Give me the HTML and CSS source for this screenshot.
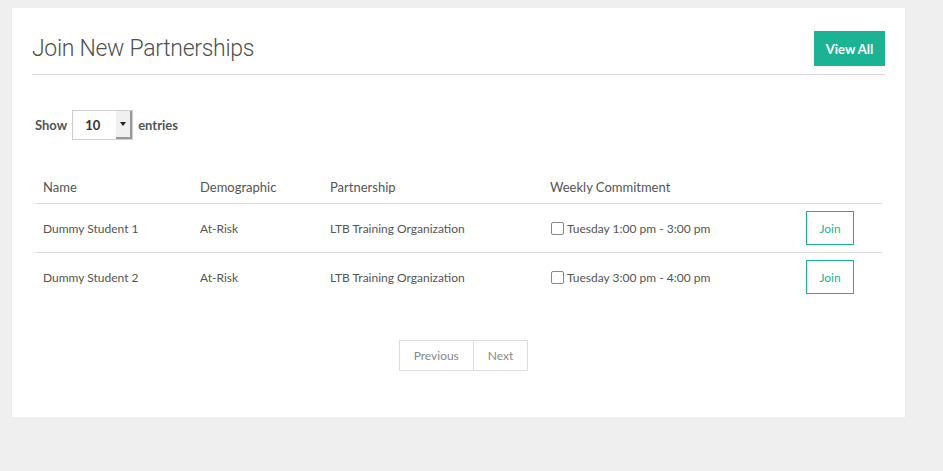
FILE: index.html
```html
<!DOCTYPE html>
<html>
<head>
<meta charset="utf-8">
<link rel="stylesheet" href="styles.css">
</head>
<body>
<div class="card">
  <div class="card-head">
    <h1 class="title">Join New Partnerships</h1>
    <a class="btn-primary">View All</a>
  </div>
  <div class="length">
    <span class="lbl">Show</span>
    <div class="select"><span class="val">10</span><span class="arrow"></span></div>
    <span class="lbl">entries</span>
  </div>
  <table class="tbl">
    <thead>
      <tr><th class="c1">Name</th><th class="c2">Demographic</th><th class="c3">Partnership</th><th class="c4">Weekly Commitment</th><th class="c5"></th></tr>
    </thead>
    <tbody>
      <tr><td>Dummy Student 1</td><td>At-Risk</td><td>LTB Training Organization</td><td><label class="chk"><span class="box"></span>Tuesday 1:00 pm - 3:00 pm</label></td><td><a class="btn-join">Join</a></td></tr>
      <tr><td>Dummy Student 2</td><td>At-Risk</td><td>LTB Training Organization</td><td><label class="chk"><span class="box"></span>Tuesday 3:00 pm - 4:00 pm</label></td><td><a class="btn-join">Join</a></td></tr>
    </tbody>
  </table>
  <div class="pager">
    <a class="pg">Previous</a><a class="pg">Next</a>
  </div>
</div>
</body>
</html>
```
FILE: styles.css
```css
html, body { margin: 0; padding: 0; }
body {
  background: #efefef;
  font-family: Lato, "Open Sans", sans-serif;
  color: #555;
  padding: 8px 0 0 12px;
}
.card {
  width: 893px;
  background: #fff;
  box-shadow: 0 2px 1px #dedede;
  padding: 0 20px 46px 20px;
  box-sizing: border-box;
}
.card-head {
  display: flex;
  justify-content: space-between;
  align-items: flex-end;
  padding-top: 23px;
  padding-bottom: 8px;
  border-bottom: 1px solid #d8d8d8;
}
.title {
  margin: 0;
  font-family: Roboto, "Liberation Sans", sans-serif;
  font-weight: 300;
  font-size: 23px;
  color: #505050;
  line-height: 28px;
  letter-spacing: -0.3px;
  padding-bottom: 3px;
}
.btn-primary {
  background: #1bb394;
  color: #fff;
  font-weight: 700;
  font-size: 13px;
  width: 71px;
  height: 35px;
  display: flex;
  align-items: center;
  justify-content: center;
}
.length {
  display: flex;
  align-items: center;
  gap: 5px;
  margin-top: 35px;
  padding-left: 3px;
}
.lbl { font-weight: 700; font-size: 13px; color: #555; }
.select {
  width: 61px;
  height: 30px;
  box-sizing: border-box;
  border: 1px solid #cfcfcf;
  display: flex;
  align-items: stretch;
}
.val {
  flex: 1;
  padding-left: 12px;
  font-size: 13px;
  font-weight: 700;
  color: #333;
  display: flex;
  align-items: center;
}
.arrow {
  width: 14px;
  background: #f0f0f0;
  border-right: 2px solid #999;
  border-bottom: 2px solid #999;
  position: relative;
}
.arrow::after {
  content: "";
  position: absolute;
  left: 4px;
  top: 11px;
  border-left: 3px solid transparent;
  border-right: 3px solid transparent;
  border-top: 4px solid #222;
}
.tbl {
  margin: 29px 3px 0 3px;
  width: 847px;
  border-collapse: collapse;
  font-size: 12px;
  table-layout: fixed;
}
.tbl th {
  text-align: left;
  font-weight: 400;
  font-size: 13px;
  color: #555;
  padding: 0 8px 8px 8px;
  height: 26px;
  vertical-align: bottom;
  border-bottom: 1px solid #dcdcdc;
}
.tbl td {
  padding: 0 8px;
  height: 48px;
  vertical-align: middle;
  border-bottom: 1px solid #dcdcdc;
}
.tbl tbody tr:last-child td { border-bottom: none; }
.c1 { width: 141px; }
.c2 { width: 114px; }
.c3 { width: 204px; }
.c4 { width: 240px; }
.chk { display: flex; align-items: center; gap: 3px; }
.box {
  width: 11px;
  height: 11px;
  border: 1px solid #888;
  border-radius: 2px;
  background: #fff;
  margin-left: 1px;
}
.btn-join {
  display: flex;
  align-items: center;
  justify-content: center;
  width: 48px;
  height: 34px;
  box-sizing: border-box;
  border: 1px solid #1bb394;
  color: #1bb394;
  font-size: 12px;
}
.pager {
  display: flex;
  justify-content: center;
  margin-top: 39px;
  padding-left: 10px;
}
.pg {
  border: 1px solid #ddd;
  color: #888;
  font-size: 12px;
  height: 31px;
  padding: 0 14px;
  display: flex;
  align-items: center;
  box-sizing: border-box;
}
.pg + .pg { border-left: none; }
```
